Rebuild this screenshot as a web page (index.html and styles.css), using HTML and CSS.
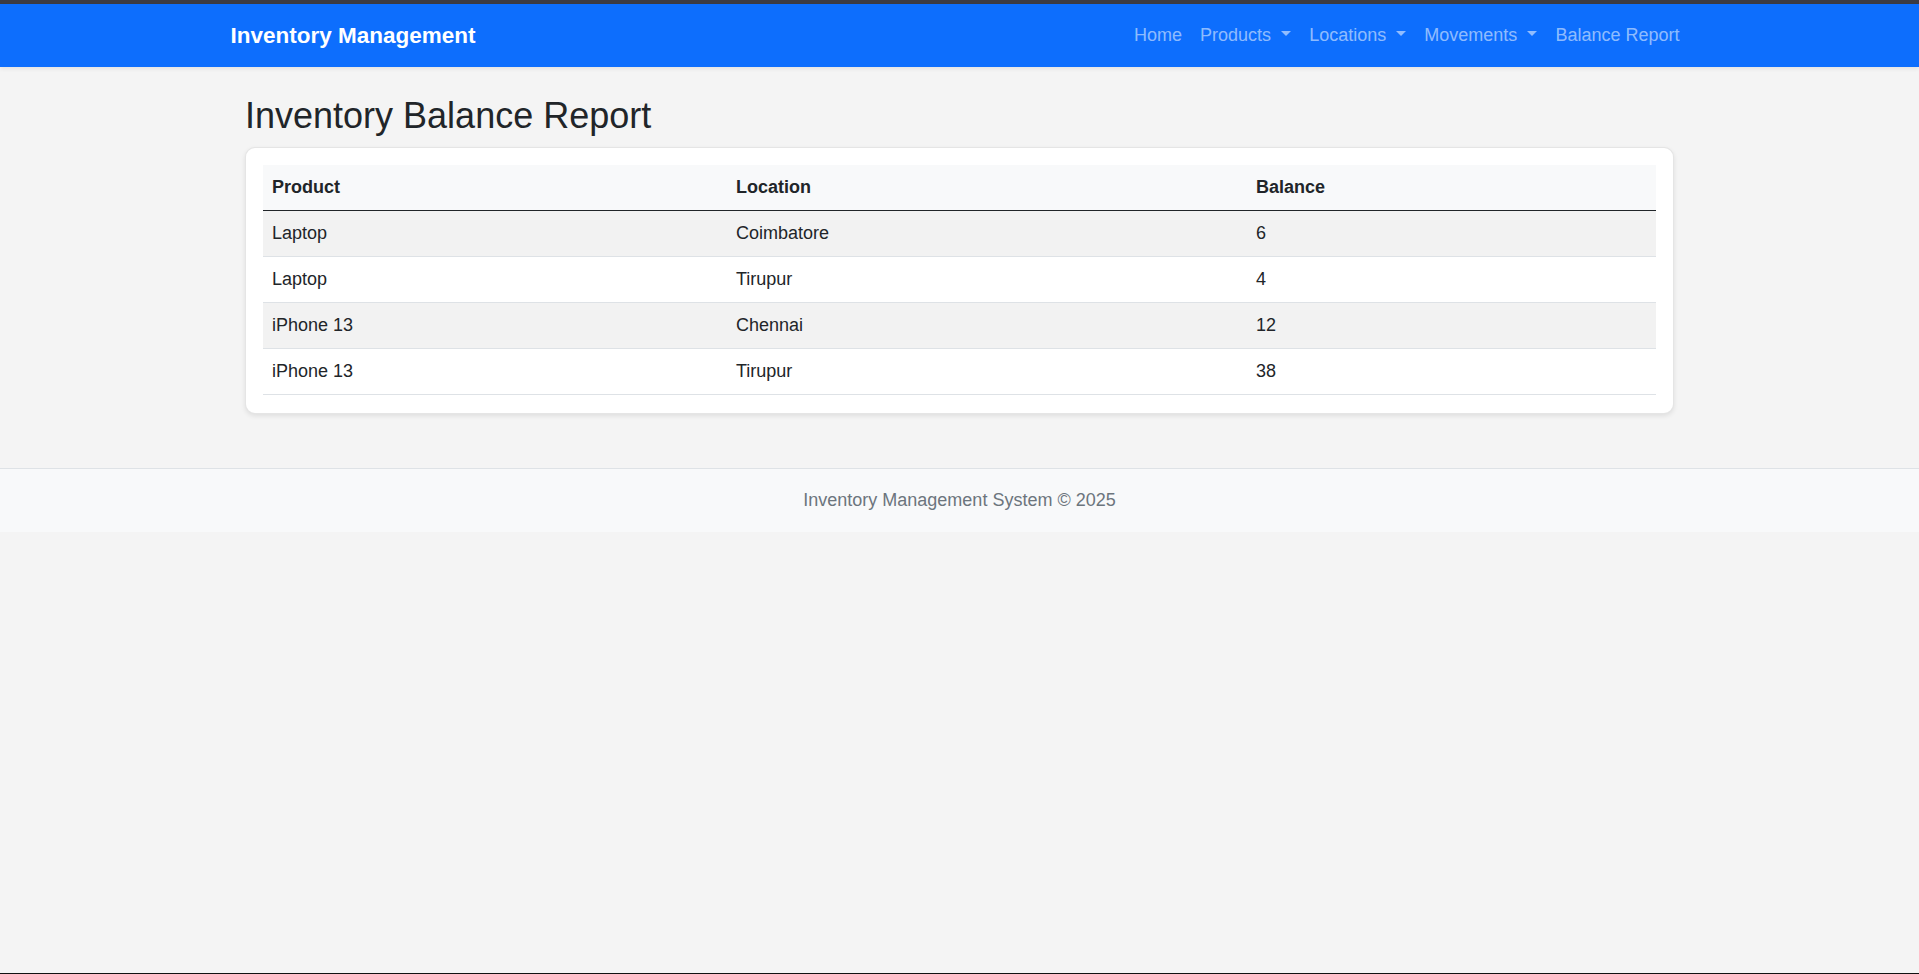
FILE: index.html
```html
<!DOCTYPE html>
<html lang="en">
<head>
<meta charset="utf-8">
<title>Inventory Balance Report</title>
<link rel="stylesheet" href="styles.css">
</head>
<body>
<div class="topstrip"></div>
<nav class="navbar">
  <div class="nav-inner">
    <a class="brand" href="#">Inventory Management</a>
    <ul class="nav-links">
      <li><a class="nav-link" href="#">Home</a></li>
      <li><a class="nav-link dropdown" href="#">Products</a></li>
      <li><a class="nav-link dropdown" href="#">Locations</a></li>
      <li><a class="nav-link dropdown" href="#">Movements</a></li>
      <li><a class="nav-link" href="#">Balance Report</a></li>
    </ul>
  </div>
</nav>
<main class="container">
  <h2 class="title">Inventory Balance Report</h2>
  <div class="card">
    <div class="card-body">
      <table class="table">
        <thead>
          <tr><th class="c1">Product</th><th class="c2">Location</th><th class="c3">Balance</th></tr>
        </thead>
        <tbody>
          <tr><td>Laptop</td><td>Coimbatore</td><td>6</td></tr>
          <tr><td>Laptop</td><td>Tirupur</td><td>4</td></tr>
          <tr><td>iPhone 13</td><td>Chennai</td><td>12</td></tr>
          <tr><td>iPhone 13</td><td>Tirupur</td><td>38</td></tr>
        </tbody>
      </table>
    </div>
  </div>
</main>
<footer class="footer">Inventory Management System © 2025</footer>
<div class="spacer"></div>
<div class="bottomline"></div>
</body>
</html>
```
FILE: styles.css
```css
html {
  font-size: 18px;
  height: 100%;
}
* { box-sizing: border-box; }
body {
  margin: 0;
  min-height: 100%;
  display: flex;
  flex-direction: column;
  background: #f4f4f4;
  font-family: "Liberation Sans", Arial, sans-serif;
  font-size: 1rem;
  line-height: 1.5;
  color: #212529;
}
.topstrip {
  height: 4px;
  background: #3c3b43;
}
.navbar {
  height: 63px;
  background: #0d6efd;
  box-shadow: 0 2px 4px rgba(0, 0, 0, 0.07);
  display: flex;
  align-items: center;
}
.nav-inner {
  width: 1458px;
  margin: 0 auto;
  display: flex;
  align-items: center;
  justify-content: space-between;
}
.brand {
  color: #fff;
  font-weight: 700;
  font-size: 22.5px;
  text-decoration: none;
  line-height: 1.5;
}
.nav-links {
  list-style: none;
  margin: 0;
  padding: 0;
  display: flex;
}
.nav-link {
  display: block;
  padding: 9px;
  color: rgba(255, 255, 255, 0.55);
  text-decoration: none;
}
.dropdown::after {
  content: "";
  display: inline-block;
  margin-left: 0.56em;
  vertical-align: 0.255em;
  border-top: 0.3em solid;
  border-left: 0.3em solid transparent;
  border-right: 0.3em solid transparent;
}
.container {
  width: 1429px;
  margin: 27px auto 0;
}
.title {
  font-size: 36px;
  font-weight: 500;
  line-height: 1.2;
  margin: 0 0 10px;
}
.card {
  background: #fff;
  border: 1px solid rgba(0, 0, 0, 0.1);
  border-radius: 10px;
  box-shadow: 0 2px 5px rgba(0, 0, 0, 0.09);
}
.card-body {
  padding: 17px 17px 18px;
}
.table {
  width: 100%;
  border-collapse: collapse;
}
.table th,
.table td {
  text-align: left;
  padding: 9px;
  line-height: 27px;
  border-bottom: 1px solid #dee2e6;
}
.table thead th {
  background: #f8f9fa;
  font-weight: 700;
  border-bottom: 1px solid #212529;
}
.table tbody tr:nth-child(odd) td {
  background: #f2f2f2;
}
.c1 { width: 464px; }
.c2 { width: 520px; }
.c3 { width: auto; }
.footer {
  margin-top: 54px;
  background: #f8f9fa;
  border-top: 1px solid #dee2e6;
  color: #6c757d;
  text-align: center;
  padding: 18px 0;
  line-height: 27px;
}
.spacer { flex: 1; }
.bottomline {
  height: 1px;
  background: #111;
}
```
